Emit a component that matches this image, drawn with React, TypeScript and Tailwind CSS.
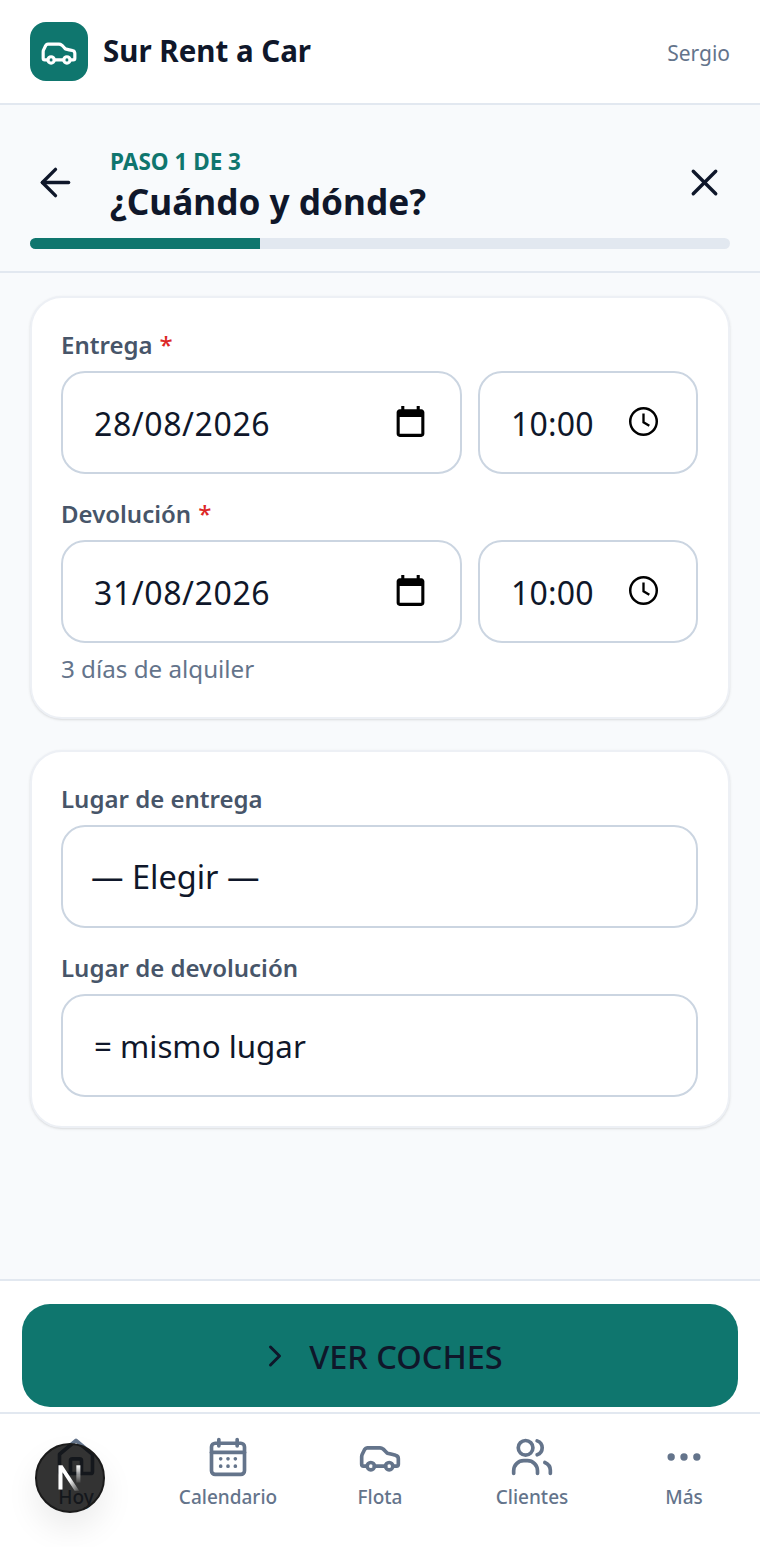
const CarIcon = ({ className }: { className: string }) => (
  <svg className={className} viewBox="0 0 24 24" fill="none" stroke="currentColor" strokeWidth="2" strokeLinecap="round" strokeLinejoin="round">
    <path d="M19 17h2c.6 0 1-.4 1-1v-3c0-.9-.7-1.700-1.500-1.900C18.700 10.600 16 10 16 10s-1.300-1.400-2.200-2.300c-.5-.4-1.100-.7-1.800-.7H5c-.6 0-1.100.4-1.400.9l-1.400 2.900A3.700 3.700 0 0 0 2 12v4c0 .6.4 1 1 1h2" />
    <circle cx="7" cy="17" r="2" />
    <path d="M9 17h6" />
    <circle cx="17" cy="17" r="2" />
  </svg>
);

const PickerCalendar = () => (
  <svg className="mb-[3px] h-[37px] w-[37px] text-black" viewBox="0 0 24 24" fill="currentColor">
    <path d="M19 4h-1V2h-2v2H8V2H6v2H5c-1.100 0-2 .9-2 2v14c0 1.100.9 2 2 2h14c1.100 0 2-.9 2-2V6c0-1.100-.9-2-2-2zm0 16H5V9h14v11z" />
  </svg>
);

const PickerClock = () => (
  <svg className="mb-[3px] h-[35px] w-[35px] text-black" viewBox="0 0 24 24" fill="none" stroke="currentColor">
    <circle cx="12" cy="12" r="9.100" strokeWidth="1.700" />
    <path d="M12 6.500v6l4 2.400" strokeWidth="1.600" />
  </svg>
);

const Label = ({ text, required }: { text: string; required?: boolean }) => (
  <div className="mb-[10px] text-[24px] leading-[32px] font-semibold text-[#475569]">
    {text}
    {required && <span className="ml-[7px] font-medium text-[#dc2626]">*</span>}
  </div>
);

const DateRow = ({ date }: { date: string }) => (
  <div className="flex gap-[16px]">
    <div className="flex h-[103px] flex-1 items-center justify-between rounded-[24px] border-2 border-[#cbd5e1] bg-white pr-[31px] pl-[31px] text-[32px] tracking-[0.6px] text-[#0f172a]">
      <span className="mt-[2px]">{date}</span>
      <PickerCalendar />
    </div>
    <div className="flex h-[103px] w-[220px] items-center justify-between rounded-[24px] border-2 border-[#cbd5e1] bg-white pr-[35px] pl-[31px] text-[32px] tracking-[0.2px] text-[#0f172a]">
      <span className="mt-[2px]">10:00</span>
      <PickerClock />
    </div>
  </div>
);

const Select = ({ value, className }: { value: string; className: string }) => (
  <div className={`flex h-[103px] items-center rounded-[24px] border-2 border-[#cbd5e1] bg-white pt-[2px] text-[#0f172a] ${className}`}>
    {value}
  </div>
);

const navLabel = "mt-[4px] text-[19px] leading-[28px] font-medium text-[#64748b]";

const BottomNav = () => (
  <nav className="relative grid h-[135px] grid-cols-5 border-t-2 border-[#e2e8f0] bg-white pt-[21px]">
    <div className="flex flex-col items-center">
      <svg className="h-[44px] w-[44px] text-[#64748b]" viewBox="0 0 24 24" fill="none" stroke="currentColor" strokeWidth="2" strokeLinecap="round" strokeLinejoin="round">
        <path d="M3 10.500 12 3l9 7.500V20a1 1 0 0 1-1 1H4a1 1 0 0 1-1-1z" />
        <path d="M9 21v-7a1 1 0 0 1 1-1h4a1 1 0 0 1 1 1v7" />
      </svg>
      <span className={navLabel}>Hoy</span>
    </div>
    <div className="flex flex-col items-center">
      <svg className="h-[44px] w-[44px] text-[#64748b]" viewBox="0 0 24 24" fill="none" stroke="currentColor" strokeWidth="2" strokeLinecap="round" strokeLinejoin="round">
        <path d="M7 2.500v3.500M17 2.500v3.500" />
        <rect x="3" y="4.500" width="18" height="17" rx="2" />
        <path d="M3 9.500h18" />
        <path d="M8 13h.01M12 13h.01M16 13h.01M8 17h.01M12 17h.01M16 17h.01" />
      </svg>
      <span className={navLabel}>Calendario</span>
    </div>
    <div className="flex flex-col items-center">
      <CarIcon className="h-[44px] w-[44px] text-[#64748b]" />
      <span className={navLabel}>Flota</span>
    </div>
    <div className="flex flex-col items-center">
      <svg className="h-[44px] w-[44px] text-[#64748b]" viewBox="0 0 24 24" fill="none" stroke="currentColor" strokeWidth="2" strokeLinecap="round" strokeLinejoin="round">
        <circle cx="8.500" cy="7" r="4" />
        <path d="M14.800 3.200a4 4 0 0 1 0 7.600" />
        <path d="M2 21v-1.500a5.500 5.500 0 0 1 5.500-5.500h2a5.500 5.500 0 0 1 5.500 5.500v1.500" />
        <path d="M19 15c1.800.8 3 2.300 3 4.200v1.800" />
      </svg>
      <span className={navLabel}>Clientes</span>
    </div>
    <div className="flex flex-col items-center">
      <svg className="h-[44px] w-[44px] text-[#64748b]" viewBox="0 0 24 24" fill="currentColor">
        <circle cx="5" cy="12" r="2" />
        <circle cx="12" cy="12" r="2" />
        <circle cx="19" cy="12" r="2" />
      </svg>
      <span className={navLabel}>Más</span>
    </div>
    {/* dev badge sits over the first tab */}
    <div className="absolute top-[29px] left-[35px] flex h-[70px] w-[70px] items-center justify-center rounded-full border-2 border-[#1a1a1a] bg-[#000000]/80 shadow-[0_16px_32px_rgba(0,0,0,0.08)]">
      <svg className="h-[30px] w-[30px]" viewBox="0 0 26 26" fill="none">
        <defs>
          <linearGradient id="diag" x1="0" y1="0" x2="1" y2="1">
            <stop offset="0.55" stopColor="#fff" />
            <stop offset="1" stopColor="#fff" stopOpacity="0.1" />
          </linearGradient>
          <linearGradient id="stem" x1="0" y1="0" x2="0" y2="1">
            <stop offset="0" stopColor="#fff" />
            <stop offset="1" stopColor="#fff" stopOpacity="0.1" />
          </linearGradient>
        </defs>
        <path d="M3 2h3.500L21 24h-4L6.500 8v15H3z" fill="url(#diag)" />
        <path d="M18.500 2H22v15h-3.500z" fill="url(#stem)" />
      </svg>
    </div>
  </nav>
);

export default function App() {
  return (
    <div className="flex h-[1547px] w-[760px] flex-col bg-[#f8fafc] font-['Noto_Sans',sans-serif]">
      <header className="flex h-[105px] items-center justify-between border-b-2 border-[#e2e8f0] bg-white px-[30px]">
        <div className="flex items-center gap-[15px]">
          <div className="flex h-[59px] w-[58px] items-center justify-center rounded-[16px] bg-[#0f766e]">
            <CarIcon className="h-[38px] w-[38px] text-white" />
          </div>
          <span className="text-[29.500px] font-bold text-[#0f172a]">Sur Rent a Car</span>
        </div>
        <span className="mt-[5px] text-[21px] text-[#64748b]">Sergio</span>
      </header>

      <section className="border-b-2 border-[#e2e8f0] px-[30px] pt-[43px] pb-[22px]">
        <div className="flex items-center justify-between">
          <div className="flex items-center gap-[30px]">
            <div className="mb-[10px] flex h-[50px] w-[50px] items-center justify-center">
              <svg className="h-[45px] w-[45px] text-[#0f172a]" viewBox="0 0 24 24" fill="none" stroke="currentColor" strokeWidth="1.800" strokeLinecap="round" strokeLinejoin="round">
                <path d="m12 19-7-7 7-7" />
                <path d="M19 12H5" />
              </svg>
            </div>
            <div>
              <div className="text-[22.500px] leading-[28px] font-bold text-[#0f766e]">PASO 1 DE 3</div>
              <div className="mt-[1px] mb-[1px] text-[35.200px] leading-[48px] font-bold text-[#0f172a]">¿Cuándo y dónde?</div>
            </div>
          </div>
          <svg className="mr-[3px] mb-[10px] h-[45px] w-[45px] text-[#0f172a]" viewBox="0 0 24 24" fill="none" stroke="currentColor" strokeWidth="1.800" strokeLinecap="round" strokeLinejoin="round">
            <path d="M18 6 6 18" />
            <path d="m6 6 12 12" />
          </svg>
        </div>
        <div className="mt-[12px] h-[11px] overflow-hidden rounded-full bg-[#e2e8f0]">
          <div className="h-full w-[230px] bg-[#0f766e]" />
        </div>
      </section>

      <main className="flex flex-1 flex-col gap-[31px] px-[30px] pt-[23px]">
        <div className="h-[423px] rounded-[32px] border-2 border-[#edf0f5] bg-white pt-[31px] pr-[30px] pl-[29px] shadow-sm">
          <Label text="Entrega" required />
          <DateRow date="28/08/2026" />
          <div className="mt-[24px]">
            <Label text="Devolución" required />
          </div>
          <DateRow date="31/08/2026" />
          <div className="mt-[10px] text-[24.200px] leading-[32px] text-[#64748b]">3 días de alquiler</div>
        </div>
        <div className="h-[378px] rounded-[32px] border-2 border-[#edf0f5] bg-white pt-[31px] pr-[30px] pl-[29px] shadow-sm">
          <Label text="Lugar de entrega" />
          <Select value="— Elegir —" className="pl-[28px] text-[32.500px]" />
          <div className="mt-[24px]">
            <Label text="Lugar de devolución" />
          </div>
          <Select value="= mismo lugar" className="pl-[31px] text-[31.300px]" />
        </div>
      </main>

      <div className="h-[133px] border-t-2 border-[#e2e8f0] bg-white px-[22px] pt-[23px]">
        <button className="flex h-[103px] w-full items-center justify-center gap-[16px] rounded-[28px] bg-[#0f766e] text-[32.500px] font-medium text-[#0f172a]">
          <svg className="h-[36px] w-[36px]" viewBox="0 0 24 24" fill="none" stroke="currentColor" strokeWidth="2" strokeLinecap="round" strokeLinejoin="round">
            <path d="m9 18 6-6-6-6" />
          </svg>
          <span className="mt-[3px]">VER COCHES</span>
        </button>
      </div>

      <BottomNav />
    </div>
  );
}
